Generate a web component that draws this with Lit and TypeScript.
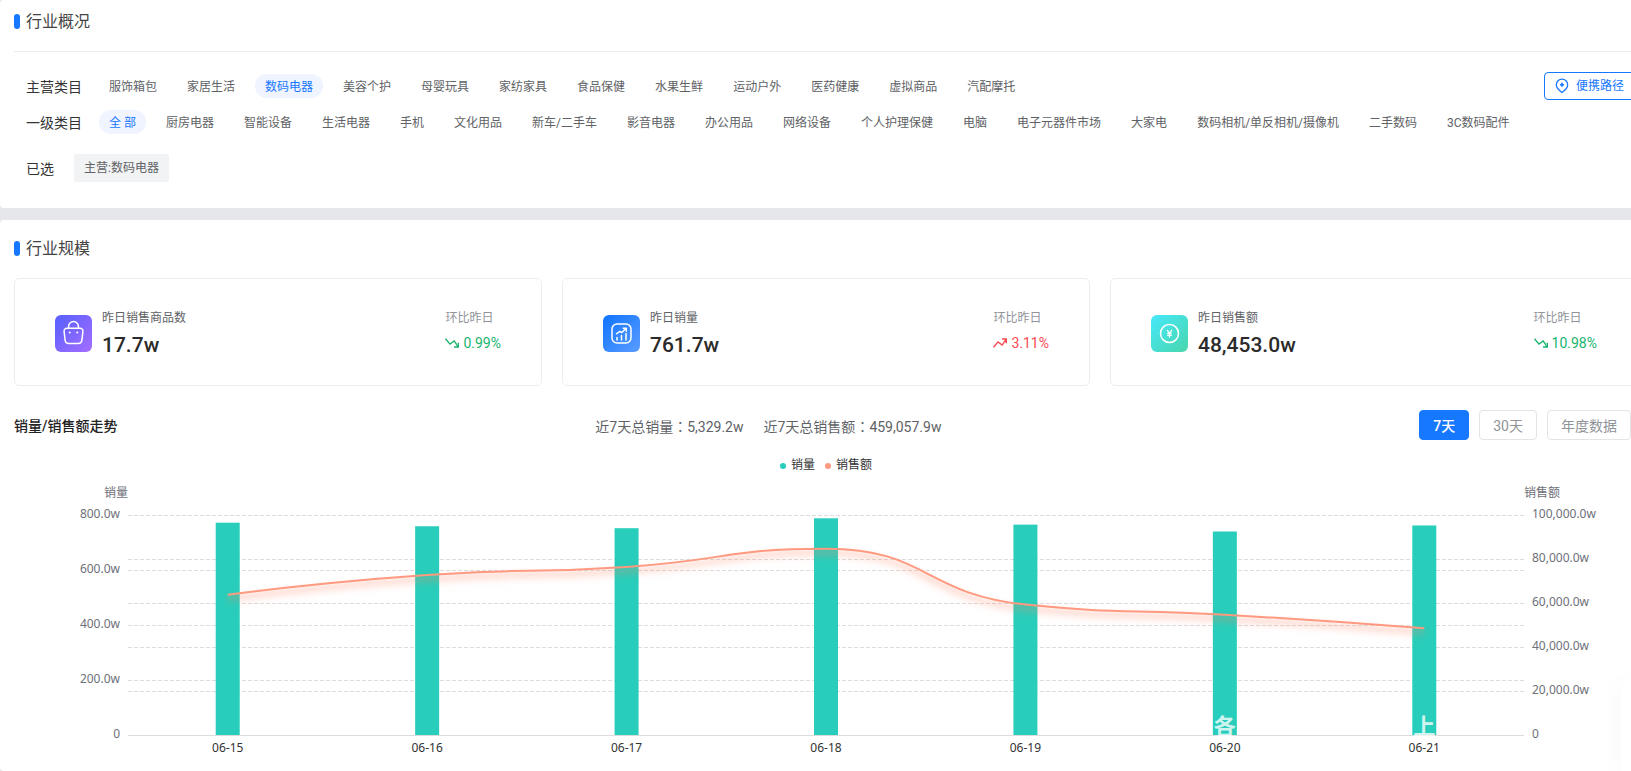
import { LitElement, html, svg, css } from "lit";
import { customElement, state } from "lit/decorators.js";
import { classMap } from "lit/directives/class-map.js";

const MAIN_CATEGORIES = [
  "服饰箱包", "家居生活", "数码电器", "美容个护", "母婴玩具", "家纺家具",
  "食品保健", "水果生鲜", "运动户外", "医药健康", "虚拟商品", "汽配摩托",
];

const SUB_CATEGORIES = [
  "全 部", "厨房电器", "智能设备", "生活电器", "手机", "文化用品", "新车/二手车",
  "影音电器", "办公用品", "网络设备", "个人护理保健", "电脑", "电子元器件市场",
  "大家电", "数码相机/单反相机/摄像机", "二手数码", "3C数码配件",
];

const RANGES = ["7天", "30天", "年度数据"];

const DAYS = [
  { date: "06-15", volume: 772, revenue: 63800 },
  { date: "06-16", volume: 759, revenue: 72700 },
  { date: "06-17", volume: 752, revenue: 76400 },
  { date: "06-18", volume: 788, revenue: 84700 },
  { date: "06-19", volume: 765, revenue: 59300 },
  { date: "06-20", volume: 740, revenue: 54700 },
  { date: "06-21", volume: 762, revenue: 48500 },
];

type Point = [number, number];

/* Smooth curve whose control points never leave the box of the two neighbours. */
function smoothPath(points: Point[], smooth = 0.5): string {
  if (!points.length) return "";
  let d = `M${points[0][0]},${points[0][1]}`;
  let out: Point = points[0];
  for (let i = 1; i < points.length; i++) {
    const p = points[i];
    const prev = points[i - 1];
    const next = points[i + 1];
    let cIn: Point = p;
    let cOut: Point = p;
    if (next) {
      const v: Point = [next[0] - prev[0], next[1] - prev[1]];
      const lenPrev = Math.hypot(p[0] - prev[0], p[1] - prev[1]);
      const lenNext = Math.hypot(next[0] - p[0], next[1] - p[1]);
      const ratio = lenNext / (lenNext + lenPrev);
      const clamp = (n: number, a: number, b: number) =>
        Math.max(Math.min(n, Math.max(a, b)), Math.min(a, b));
      cOut = [
        clamp(p[0] + v[0] * smooth * ratio, next[0], p[0]),
        clamp(p[1] + v[1] * smooth * ratio, next[1], p[1]),
      ];
      cIn = [
        clamp(p[0] - ((cOut[0] - p[0]) * lenPrev) / lenNext, prev[0], p[0]),
        clamp(p[1] - ((cOut[1] - p[1]) * lenPrev) / lenNext, prev[1], p[1]),
      ];
      cOut = [
        p[0] + ((p[0] - cIn[0]) * lenNext) / lenPrev,
        p[1] + ((p[1] - cIn[1]) * lenNext) / lenPrev,
      ];
    }
    d += ` C${out[0]},${out[1]} ${cIn[0]},${cIn[1]} ${p[0]},${p[1]}`;
    out = cOut;
  }
  return d;
}

@customElement("trend-chart")
export class TrendChart extends LitElement {
  @state() private width = 1624;
  private observer?: ResizeObserver;

  static styles = css`
    :host {
      display: block;
      overflow: hidden;
    }
    svg {
      display: block;
      font: 12px "Noto Sans", "Noto Sans CJK SC", sans-serif;
    }
    .grid {
      stroke: #dcdcdc;
      stroke-dasharray: 4 2;
    }
    .axis {
      stroke: #dcdcdc;
    }
    .bar {
      fill: #28cebb;
    }
    .line {
      fill: none;
      stroke: #ff9980;
      stroke-width: 2;
      filter: drop-shadow(0 3px 2px rgba(255, 130, 95, 0.25)) drop-shadow(0 5px 3px rgba(255, 130, 95, 0.5));
    }
    .tick {
      fill: #6e7079;
    }
    .date,
    .legend {
      fill: #333;
    }
    .end {
      text-anchor: end;
    }
    .middle {
      text-anchor: middle;
    }
    .dot-volume {
      fill: #28cebb;
    }
    .dot-revenue {
      fill: #ff9980;
    }
    .mark {
      fill: #fff;
      fill-opacity: 0.8;
      font-size: 22px;
      font-weight: 700;
    }
  `;

  connectedCallback() {
    super.connectedCallback();
    this.observer = new ResizeObserver(() => this.measure());
    this.observer.observe(this);
  }

  disconnectedCallback() {
    this.observer?.disconnect();
    super.disconnectedCallback();
  }

  firstUpdated() {
    this.measure();
  }

  private measure() {
    if (this.clientWidth) this.width = this.clientWidth;
  }

  render() {
    const w = this.width;
    const left = Math.round(w * 0.07);
    const right = w - left;
    const top = 75;
    const plot = 220;
    const bottom = top + plot;
    const band = (right - left) / DAYS.length;
    const cx = (i: number) => left + band * (i + 0.5);
    const volumeY = (v: number) => bottom - (v / 800) * plot;
    const revenueY = (v: number) => bottom - (v / 100000) * plot;
    const line = smoothPath(DAYS.map((d, i) => [cx(i), revenueY(d.revenue)] as Point));
    const mid = w / 2;
    const gridLine = (y: number) =>
      svg`<line class="grid" x1=${left} x2=${right} y1=${Math.round(y) + 0.5} y2=${Math.round(y) + 0.5} />`;

    return html`
      <svg width=${w} height="330" role="img" aria-label="销量/销售额走势">
        <circle class="dot-volume" cx=${mid - 43} cy="26" r="3" />
        <text class="legend" x=${mid - 35} y="29">销量</text>
        <circle class="dot-revenue" cx=${mid + 2} cy="26" r="3" />
        <text class="legend" x=${mid + 10} y="29">销售额</text>

        <text class="tick middle" x=${left - 12} y="57">销量</text>
        <text class="tick" x=${right} y="57">销售额</text>

        ${[200, 400, 600, 800].map((v) => gridLine(volumeY(v)))}
        ${[20000, 40000, 60000, 80000].map((v) => gridLine(revenueY(v)))}
        ${[0, 200, 400, 600, 800].map(
          (v) => svg`<text class="tick end" x=${left - 8} y=${volumeY(v) + 3}>${v ? v.toFixed(1) + "w" : "0"}</text>`,
        )}
        ${[0, 20000, 40000, 60000, 80000, 100000].map(
          (v) => svg`<text class="tick" x=${right + 8} y=${revenueY(v) + 3}>${v ? v.toLocaleString("en-US") + ".0w" : "0"}</text>`,
        )}
        <line class="axis" x1=${left} x2=${right} y1=${bottom + 0.5} y2=${bottom + 0.5} />

        ${DAYS.map(
          (d, i) => svg`
            <rect class="bar" x=${cx(i) - 12} y=${volumeY(d.volume)} width="24" height=${bottom - volumeY(d.volume)} />
            <text class="date middle" x=${cx(i)} y="312">${d.date}</text>`,
        )}
        <path class="line" d=${line} />
        <text class="mark middle" x=${cx(5)} y="294">各</text>
        <text class="mark middle" x=${cx(6)} y="294">上</text>
      </svg>
    `;
  }
}

@customElement("app-root")
export class AppRoot extends LitElement {
  @state() private main = "数码电器";
  @state() private sub = "全 部";
  @state() private range = "7天";

  static styles = css`
    :host {
      display: block;
      min-height: 100vh;
      overflow: hidden;
      background: #e6e7ea;
      color: #333;
      font: 14px/20px Roboto, "Noto Sans CJK SC", sans-serif;
    }
    * {
      box-sizing: border-box;
    }
    button {
      font: inherit;
      color: inherit;
      background: none;
      border: 0;
      padding: 0;
      margin: 0;
      cursor: pointer;
      white-space: nowrap;
    }
    /* The content runs slightly wider than the window, like the page inside its frame. */
    .page {
      display: flex;
      flex-direction: column;
      gap: 12px;
      width: calc(100% + 21px);
      min-height: 100vh;
    }
    .panel {
      background: #fff;
      border-radius: 4px;
      padding: 10px 14px 26px;
    }
    .scale {
      flex: 1;
      padding-top: 17px;
      padding-bottom: 0;
    }
    h2 {
      display: flex;
      align-items: center;
      gap: 6px;
      height: 23px;
      margin: 0 0 18px;
      font-size: 16px;
      font-weight: 400;
      color: #444;
    }
    h2::before {
      content: "";
      width: 6px;
      height: 15px;
      border-radius: 3px;
      background: #1677ff;
    }
    .filters {
      display: flex;
      align-items: flex-start;
      justify-content: space-between;
      border-top: 1px solid #ececec;
      padding: 20px 0 0 12px;
    }
    .rows {
      display: flex;
      flex-direction: column;
      gap: 12px;
      padding-top: 2px;
    }
    .row {
      display: flex;
      align-items: center;
      gap: 17px;
    }
    .label {
      padding-top: 2px;
    }
    .tags {
      display: flex;
      gap: 10px;
    }
    .tag {
      height: 24px;
      padding: 2px 10px 0;
      border-radius: 12px;
      font-size: 12px;
      color: #606266;
    }
    .tag.active {
      background: #f0f4ff;
      color: #1677ff;
    }
    .chosen {
      display: flex;
      align-items: center;
      gap: 20px;
      margin-top: 20px;
      padding-left: 12px;
    }
    .chip {
      height: 28px;
      padding: 0 10px;
      border-radius: 2px;
      background: #f2f3f5;
      color: #606266;
      font-size: 12px;
      line-height: 28px;
    }
    .path {
      display: flex;
      align-items: center;
      gap: 7px;
      height: 28px;
      padding: 0 13px 0 10px;
      border: 1px solid #1677ff;
      border-radius: 4px;
      color: #1677ff;
      font-size: 12px;
    }
    .cards {
      display: grid;
      grid-template-columns: repeat(3, 1fr);
      gap: 20px;
    }
    .card {
      display: flex;
      align-items: center;
      gap: 10px;
      height: 108px;
      padding: 0 40px;
      border: 1px solid #ededed;
      border-radius: 5px;
    }
    .badge {
      display: block;
      width: 37px;
      height: 37px;
      margin-top: 2px;
      border-radius: 6px;
    }
    .violet {
      background: linear-gradient(135deg, #5560ff, #a66dff);
    }
    .blue {
      background: linear-gradient(135deg, #0f74ff, #5a9cff);
    }
    .teal {
      background: linear-gradient(135deg, #46e8fb, #49d6ac);
    }
    .figure,
    .change {
      display: flex;
      flex-direction: column;
    }
    .figure {
      flex: 1;
    }
    .name {
      font-size: 12px;
      line-height: 26px;
      color: #606266;
    }
    .value {
      font-size: 21px;
      font-weight: 500;
      line-height: 28px;
      color: #2b2b2b;
    }
    .muted {
      color: #909399;
    }
    .rate {
      display: flex;
      align-items: center;
      gap: 4px;
      margin-bottom: 4px;
      line-height: 24px;
    }
    .down {
      color: #18b46e;
    }
    .up {
      color: #f9494f;
    }
    .trend {
      display: flex;
      align-items: center;
      justify-content: space-between;
      margin-top: 24px;
      padding-right: 7px;
    }
    h3 {
      margin: 0;
      padding-top: 2px;
      font-size: 14px;
      font-weight: 500;
      color: #222;
    }
    .totals {
      display: flex;
      gap: 20px;
      padding-top: 2px;
      color: #606266;
    }
    .colon {
      font-family: "Noto Sans CJK TC", sans-serif;
    }
    .ranges {
      display: flex;
      gap: 10px;
    }
    .range {
      height: 30px;
      padding: 2px 13px 0;
      border: 1px solid #e4e4e4;
      border-radius: 4px;
      color: #909399;
    }
    .range.active {
      background: #1677ff;
      border-color: #1677ff;
      color: #fff;
      font-weight: 500;
    }
    .side {
      position: fixed;
      right: 0;
      bottom: 0;
      width: 10px;
      height: 90px;
      border-radius: 10px 0 0 0;
      background: #fff;
      box-shadow: 0 0 22px rgba(0, 0, 0, 0.05);
    }
  `;

  private tags(list: string[], current: string, pick: (t: string) => void) {
    return html`<div class="tags">
      ${list.map(
        (t) => html`<button
          class=${classMap({ tag: true, active: t === current })}
          @click=${() => pick(t)}
        >${t}</button>`,
      )}
    </div>`;
  }

  private card(name: string, value: string, rate: string, up: boolean, badge: unknown) {
    return html`<div class="card">
      ${badge}
      <div class="figure">
        <span class="name">${name}</span>
        <span class="value">${value}</span>
      </div>
      <div class="change">
        <span class="name muted">环比昨日</span>
        <span class=${classMap({ rate: true, up, down: !up })}>
          <svg width="14" height="10" viewBox="0 0 14 10" fill="none" stroke="currentColor" stroke-width="1.4" aria-hidden="true">
            ${up
              ? svg`<path d="M.5 9.2 5 3.9 9.2 7.1 13.2 1.2M9 1h4.3v4.3" />`
              : svg`<path d="M.5.8 5 6.1 9.2 2.9 13.2 8.8M9 9h4.3V4.7" />`}
          </svg>${rate}
        </span>
      </div>
    </div>`;
  }

  render() {
    const bag = html`<svg class="badge violet" viewBox="0 0 37 37" fill="none" stroke="#fff" stroke-width="1.5" stroke-linecap="round" aria-hidden="true">
      <path d="M12.200 13.200h12.600c2.300 0 3.400 1.300 3.100 3.500l-1 8.400c-.3 2.300-1.500 3.300-3.700 3.300h-9.400c-2.200 0-3.400-1-3.700-3.300l-1-8.400c-.3-2.200.8-3.500 3.100-3.500Z" />
      <path d="M13.600 13v-1.500a4.900 4.900 0 0 1 9.800 0V13" />
      <path d="M14.700 17.500h.01M22.300 17.500h.01" stroke-width="2" />
    </svg>`;
    const chart = html`<svg class="badge blue" viewBox="0 0 37 37" fill="none" stroke="#fff" stroke-width="1.5" stroke-linecap="round" stroke-linejoin="round" aria-hidden="true">
      <rect x="9" y="9" width="19" height="19" rx="5" />
      <path d="M14 25v-2.500M18.500 25v-4.500M23 25v-6.500M13.500 18.800l3-2.300 2.300 1 4.200-4M20.300 13.200h3v3" />
    </svg>`;
    const coin = html`<svg class="badge teal" viewBox="0 0 37 37" fill="none" stroke="#fff" stroke-width="1.5" aria-hidden="true">
      <circle cx="18.5" cy="18.5" r="9" />
      <path d="m16 14.800 2.500 3.200 2.500-3.200M18.500 18v4.800M16.200 18.300h4.600M16.200 20.400h4.600" stroke-width="1.2" />
    </svg>`;

    return html`
      <main class="page">
        <section class="panel">
          <h2>行业概况</h2>
          <div class="filters">
            <div class="rows">
              <div class="row">
                <span class="label">主营类目</span>
                ${this.tags(MAIN_CATEGORIES, this.main, (t) => (this.main = t))}
              </div>
              <div class="row">
                <span class="label">一级类目</span>
                ${this.tags(SUB_CATEGORIES, this.sub, (t) => (this.sub = t))}
              </div>
            </div>
            <button class="path">
              <svg width="14" height="16" viewBox="0 0 14 16" fill="none" stroke="currentColor" stroke-width="1.3" aria-hidden="true">
                <path d="M7 14.500C3.800 12.300 1.300 10 1.300 6.800a5.700 5.700 0 0 1 11.400 0c0 3.200-2.500 5.500-5.700 7.700Z" />
                <path d="M7 4.800v4M5 6.800h4" stroke-width="1.6" />
              </svg>
              便携路径
            </button>
          </div>
          <div class="chosen">
            <span class="label">已选</span>
            <span class="chip">主营:${this.main}</span>
          </div>
        </section>

        <section class="panel scale">
          <h2>行业规模</h2>
          <div class="cards">
            ${this.card("昨日销售商品数", "17.7w", "0.99%", false, bag)}
            ${this.card("昨日销量", "761.7w", "3.11%", true, chart)}
            ${this.card("昨日销售额", "48,453.0w", "10.98%", false, coin)}
          </div>
          <div class="trend">
            <h3>销量/销售额走势</h3>
            <div class="totals">
              <span>近7天总销量<span class="colon">：</span>5,329.2w</span>
              <span>近7天总销售额<span class="colon">：</span>459,057.9w</span>
            </div>
            <div class="ranges">
              ${RANGES.map(
                (r) => html`<button
                  class=${classMap({ range: true, active: r === this.range })}
                  @click=${() => (this.range = r)}
                >${r}</button>`,
              )}
            </div>
          </div>
          <trend-chart></trend-chart>
        </section>
      </main>
      <div class="side"></div>
    `;
  }
}
